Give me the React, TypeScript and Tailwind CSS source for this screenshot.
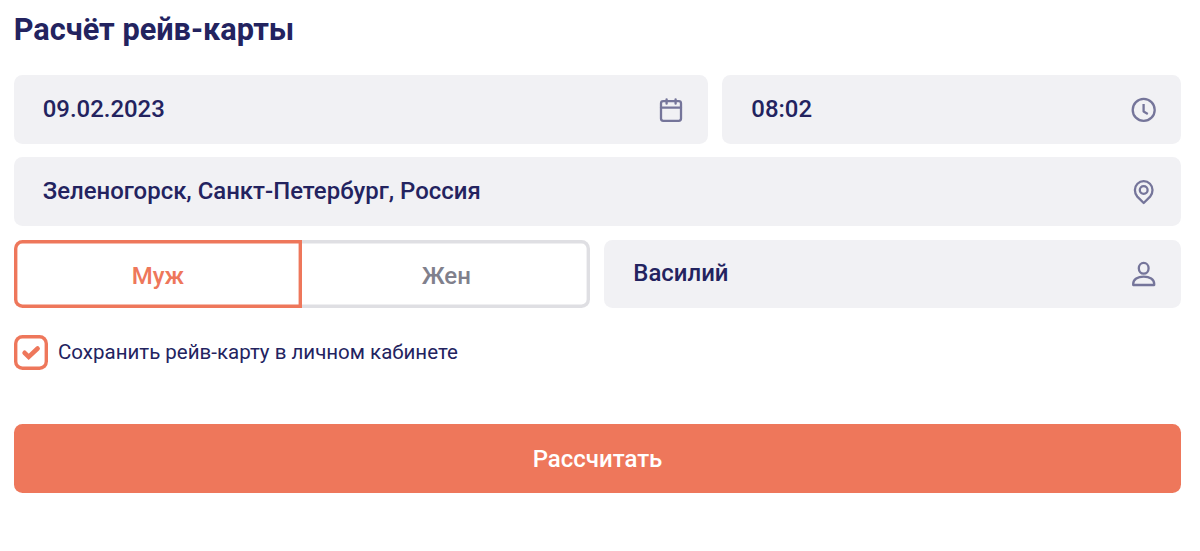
import React, { useState } from "react";

type FieldProps = {
  value: string;
  className?: string;
  children: React.ReactNode;
};

const Icon = ({ children }: { children: React.ReactNode }) => (
  <svg
    className="h-7 w-7 shrink-0"
    viewBox="0 0 28 28"
    fill="none"
    stroke="#75759a"
    strokeWidth="2.3"
    strokeLinecap="round"
    strokeLinejoin="round"
  >
    {children}
  </svg>
);

const Field = ({ value, className = "", children }: FieldProps) => (
  <div
    className={`flex h-[68.3px] items-center justify-between rounded-[8.5px] bg-[#f1f1f4] pr-[23.5px] pl-[29px] ${className}`}
  >
    <span className="pb-[1.2px] text-[23.95px] leading-7 font-medium whitespace-nowrap text-[#23235f]">
      {value}
    </span>
    {children}
  </div>
);

const App = () => {
  const [gender, setGender] = useState("male");
  const [isSaved, setIsSaved] = useState(true);

  return (
    <div className="h-[551px] w-[1200px] overflow-hidden bg-white pt-[11px] pr-[18.7px] pl-[13.7px] font-['Roboto',sans-serif] text-[#23235f]">
      <h1 className="h-[64.4px] text-[30.7px] leading-[38px] font-bold">
        Расчёт рейв-карты
      </h1>

      <div className="flex flex-col gap-[13.8px]">
        <div className="flex gap-[13.8px]">
          <Field value="09.02.2023" className="w-[694.8px]">
            <Icon>
              <rect x="4" y="5.2" width="20" height="19.6" rx="2.2" />
              <path d="M4 11.6h20M9.6 3.3v4.4M18.6 3.3v4.4" />
            </Icon>
          </Field>
          <Field value="08:02" className="flex-1">
            <Icon>
              <circle cx="13.7" cy="13.9" r="11" />
              <path d="M13.6 8v7.6l4.2 2.4" strokeLinecap="butt" />
            </Icon>
          </Field>
        </div>

        <Field value="Зеленогорск, Санкт-Петербург, Россия">
          <Icon>
            <path d="M13.7 25L7.3 18.6C5.7 16.9 4.9 14.6 4.9 12a8.8 8.8 0 0 1 17.6 0c0 2.6-.8 4.9-2.4 6.6z" />
            <circle cx="13.7" cy="12" r="3.9" />
          </Icon>
        </Field>

        <div className="flex gap-[13.8px]">
          <div className="flex h-[68.3px] w-[576.8px] text-[24px] font-medium">
            <button
              className="w-1/2 rounded-l-[8.5px] pt-1 text-[#ee775b] inset-ring-[3.4px] inset-ring-[#ee775b]"
              aria-pressed={gender === "male"}
              onClick={() => setGender("male")}
            >
              Муж
            </button>
            <div className="w-1/2 overflow-hidden">
              <button
                className="-ml-2 h-full w-[calc(100%+8px)] rounded-r-[8.5px] pt-1 pl-[8px] text-[#80808c] inset-ring-[3.4px] inset-ring-[#dfdfe3]"
                aria-pressed={gender === "female"}
                onClick={() => setGender("female")}
              >
                Жен
              </button>
            </div>
          </div>
          <Field value="Василий" className="flex-1">
            <Icon>
              <ellipse cx="13.7" cy="8.3" rx="4.9" ry="5.4" />
              <path d="M3.2 25v-1.2c0-4.5 4.5-7.2 10.5-7.2s10.5 2.700 10.500 7.200v1.200z" />
            </Icon>
          </Field>
        </div>
      </div>

      <button
        className="mt-[27.6px] flex items-center gap-[10.1px]"
        role="checkbox"
        aria-checked={isSaved}
        onClick={() => setIsSaved(!isSaved)}
      >
        <span className="flex h-[34.2px] w-[34.2px] items-center justify-center rounded-[8.5px] inset-ring-[3.4px] inset-ring-[#ee775b]">
          {isSaved && (
            <svg
              className="h-5 w-5 shrink-0"
              viewBox="0 0 20 20"
              fill="none"
              stroke="#ee775b"
              strokeWidth="4.6"
              strokeLinecap="round"
            >
              <path d="M3.6 9.8l4.100 4.100 8.900-8.400" />
            </svg>
          )}
        </span>
        <span className="pb-px text-[20.5px] leading-6">
          Сохранить рейв-карту в личном кабинете
        </span>
      </button>

      <button className="mt-[54.7px] h-[68.3px] w-full rounded-[8.5px] bg-[#ee775b] pt-[1.5px] text-[24px] font-medium text-white">
        Рассчитать
      </button>
    </div>
  );
};

export default App;
